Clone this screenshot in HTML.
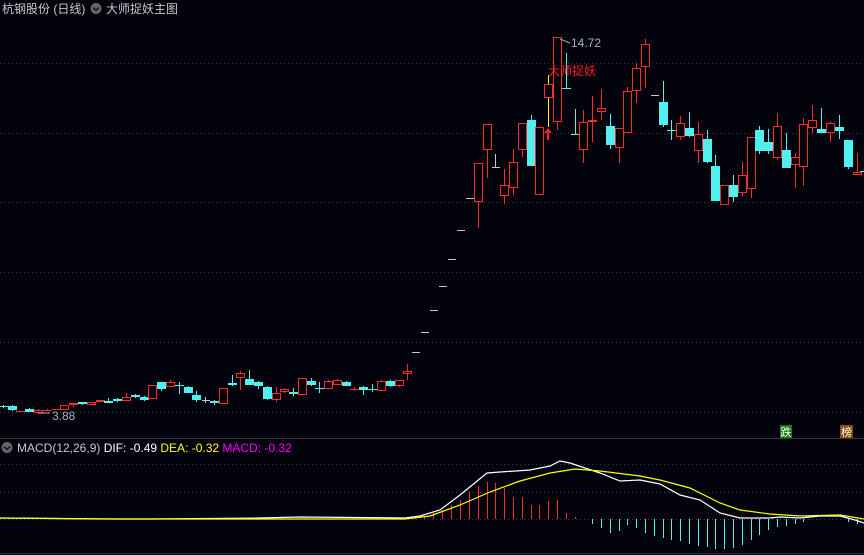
<!DOCTYPE html>
<html><head><meta charset="utf-8"><style>
body{margin:0;background:#03030d;width:864px;height:555px;overflow:hidden;font-family:"Liberation Sans","Noto Sans CJK SC",sans-serif;}
svg{position:absolute;left:0;top:0}
#c{shape-rendering:crispEdges}
</style></head><body>
<svg id="s" width="864" height="555" xmlns="http://www.w3.org/2000/svg">
<g stroke="#3a3a3a" stroke-dasharray="1,3" stroke-width="1">
<line x1="0" y1="63.5" x2="864" y2="63.5"/><line x1="0" y1="133.5" x2="864" y2="133.5"/>
<line x1="0" y1="202.5" x2="864" y2="202.5"/><line x1="0" y1="272.5" x2="864" y2="272.5"/>
<line x1="0" y1="342.5" x2="864" y2="342.5"/><line x1="0" y1="412.5" x2="864" y2="412.5"/>
<line x1="0" y1="464.5" x2="864" y2="464.5"/><line x1="0" y1="492.5" x2="864" y2="492.5"/>
<line x1="0" y1="519.5" x2="864" y2="519.5"/>
</g>
<line x1="0" y1="438.5" x2="864" y2="438.5" stroke="#333" />
<line x1="0" y1="553.5" x2="864" y2="553.5" stroke="#333" />
<g id="c"></g>
<text x="2" y="13" fill="#c8c8c8" font-size="12">杭钢股份 (日线)</text>
<circle cx="96" cy="8.5" r="5.5" fill="#666"/><path d="M93 7.5l3 3 3-3" stroke="#111" stroke-width="1.5" fill="none"/>
<text x="106" y="13" fill="#c8c8c8" font-size="12">大师捉妖主图</text>
<circle cx="7" cy="447.5" r="5.5" fill="#666"/><path d="M4 446.5l3 3 3-3" stroke="#111" stroke-width="1.5" fill="none"/>
<text x="17" y="452" font-size="12"><tspan fill="#c8c8c8">MACD(12,26,9) </tspan><tspan fill="#ffffff">DIF: -0.49 </tspan><tspan fill="#ffff00">DEA: -0.32 </tspan><tspan fill="#ff00ff">MACD: -0.32</tspan></text>
<text x="571" y="47" fill="#a8b0c0" font-size="12">14.72</text>
<path d="M560 39l10 4" stroke="#aaa"/>
<text x="52" y="420" fill="#a8b0c0" font-size="12">3.88</text>
<path d="M38 413h12" stroke="#aaa"/>
<text x="548" y="75" fill="#ff2020" font-size="12">大师捉妖</text>
<path d="M548 128l-4 5h3v7h2v-7h3z" fill="#ff2020"/>
<rect x="780" y="425" width="12" height="13" fill="#1a7a1a"/><text x="780.5" y="436" fill="#fff" font-size="11">跌</text>
<rect x="840" y="425" width="13" height="13" fill="#8a4a10"/><text x="841" y="436" fill="#fff" font-size="11">榜</text>
</svg>
<script>
var R="#ff2a2a",C="#50f0f0",W="#c8c8c8";
var d=[[3,406,406.5,405,408,'c'],[12,406,410,405,411,'cf'],[20,411,412,411,412,'rf'],[29,409,412,408,412,'cf'],[38,410,413,409,414,'r'],[47,410,411,409,411,'rf'],[56,409,410,409,410,'rf'],[64,405,410,405,410,'r'],[73,403,405,403,407,'rf'],[82,402,404,402,405,'cf'],[91,402,405,402,405,'r'],[100,400,402,400,402,'r'],[108,401,403,398,403,'cf'],[117,399,401,398,402,'cf'],[126,397,401,393,401,'r'],[135,395,397,394,398,'cf'],[144,397,400,396,401,'cf'],[152,385,399,385,399,'r'],[161,382,389,382,391,'cf'],[170,382,387,380,387,'r'],[179,385,386,382,394,'cf'],[188,387,393,386,393,'cf'],[196,395,400,391,402,'cf'],[205,400,400.5,397,403,'w'],[214,401,403,400,405,'cf'],[223,388,404,388,404,'r'],[232,383,385,375,386,'cf'],[240,373,378,371,390,'r'],[249,379,385,370,385,'cf'],[258,382,386,381,389,'cf'],[267,387,399,386,400,'cf'],[276,393,400,387,402,'r'],[284,389,392,388,393,'r'],[293,392,394,388,396,'cf'],[302,378,395,378,395,'r'],[311,381,385,378,386,'cf'],[319,388,389,382,393,'cf'],[328,381,389,380,389,'r'],[337,380,385,379,385,'r'],[346,382,386,381,386,'cf'],[354,389,390,387,391,'rf'],[363,387,390,386,395,'cf'],[372,389,389.5,384,392,'cf'],[381,381,391,380,391,'r'],[390,381,386,380,387,'cf'],[399,380,386,380,387,'r'],[407,371,374,364,380,'r'],
[415,352,352.5,352,353,'w'],[424,332,332.5,332,333,'w'],[433,310,310.5,310,311,'w'],[442,286,286.5,286,287,'w'],[451,259,259.5,259,260,'w'],[460,230,230.5,230,231,'w'],[469,198,198.5,198,199,'w'],
[478,163,202,163,228,'r'],[487,124,150,124,178,'r'],[495,167,167.5,154,168,'w'],[504,185,196,169,204,'r'],[513,162,188,149,195,'r'],[522,123,150,123,157,'r'],[531,120,166,115,166,'cf'],[539,127,195,127,195,'r'],[548,84,98,75,127,'y'],[557,37,122,37,130,'r'],[566,88,89,53,89,'cf'],[575,134,135,109,135,'cf'],[583,122,150,110,163,'r'],[592,120,122,96,142,'r'],[601,108,112,89,120,'r'],[610,126,145,114,149,'cf'],[619,128,148,128,163,'r'],[627,91,133,87,133,'r'],[636,68,91,63,103,'r'],[645,44,67,39,88,'r'],[654,95,96,95,96,'w'],[663,102,125,81,127,'cf'],[671,130,131,120,140,'cf'],[680,123,137,116,140,'r'],[689,128,136,112,137,'cf'],[698,134,151,122,163,'r'],[707,139,162,130,163,'cf'],[715,166,201,155,201,'cf'],[724,185,205,185,205,'r'],[733,185,197,175,202,'cf'],[742,175,193,162,196,'r'],[751,137,189,137,198,'r'],[759,130,151,126,154,'cf'],[768,142,151,129,154,'cf'],[777,126,158,113,160,'r'],[786,150,168,133,168,'cf'],[795,157,165,153,188,'r'],[803,124,167,118,186,'r'],[812,120,128,105,133,'r'],[821,129,133,108,133,'cf'],[830,123,133,121,142,'r'],[839,127,131,115,139,'cf'],[848,140,167,140,169,'cf'],[857,172,175,153,175,'r'],[864,171,172,171,172,'cf']];
var h='';
d.forEach(function(a){var x=a[0],t=a[5];var col=(t[0]=='r'||t=='y')?R:t[0]=='c'?C:W;var wc=t=='y'?'#ffff00':col;
h+='<rect x="'+x+'" y="'+a[3]+'" width="1" height="'+Math.max(a[4]-a[3],1)+'" fill="'+wc+'"/>';
var bh=Math.max(Math.round(a[2]-a[1]),1);
if(t=='r'||t=='y'){h+='<rect x="'+(x-4)+'" y="'+a[1]+'" width="9" height="'+bh+'" fill="'+R+'"/>';
 if(bh>2)h+='<rect x="'+(x-3)+'" y="'+(a[1]+1)+'" width="7" height="'+(bh-2)+'" fill="#03030d"/>';}
else if(t=='w'||t=='c')h+='<rect x="'+(x-3)+'" y="'+Math.round(a[1])+'" width="8" height="1" fill="'+col+'"/>';
else h+='<rect x="'+(x-4)+'" y="'+a[1]+'" width="9" height="'+bh+'" fill="'+col+'"/>';});
var hb=[[415,517],[424,516],[433,513],[442,510],[451,505],[460,500],[469,492],[478,486],[487,482],[495,483],[504,488],[513,497],[522,497],[531,505],[539,505],[548,501],[557,500],[566,513],[575,517],[592,524],[601,528],[610,533],[619,531],[627,525],[636,528],[645,533],[654,536],[663,538],[671,540],[680,541],[689,544],[698,546],[707,547],[715,549],[724,549],[733,548],[742,545],[751,540],[759,535],[768,530],[777,527],[786,526],[795,524],[803,522],[848,522],[857,524]];
hb.forEach(function(b){var t=Math.min(b[1],519),hh=Math.abs(b[1]-519);h+='<rect x="'+b[0]+'" y="'+t+'" width="1" height="'+hh+'" fill="'+(b[1]<519?R:C)+'"/>';});
document.getElementById('c').innerHTML=h;
var s=document.getElementById('s');
s.insertAdjacentHTML('beforeend','<polyline fill="none" stroke="#ffffff" stroke-width="1.2" points="0,518 120,519 150,519 260,518 300,517 405,518 420,516 440,510 460,495 487,473 500,472 530,470 550,466 560,461 570,463 585,468 600,473 620,481 640,480 660,484 680,495 700,500 720,513 740,518 770,518 780,517 800,518 820,516 840,516 855,520 864,523"/><polyline fill="none" stroke="#ffff00" stroke-width="1.2" points="0,518 100,519 200,519 405,519 430,516 460,505 490,492 520,481 550,473 575,469 600,471 640,476 660,480 690,488 720,503 740,510 770,514 800,516 840,515 864,519"/>');
</script>
</body></html>
